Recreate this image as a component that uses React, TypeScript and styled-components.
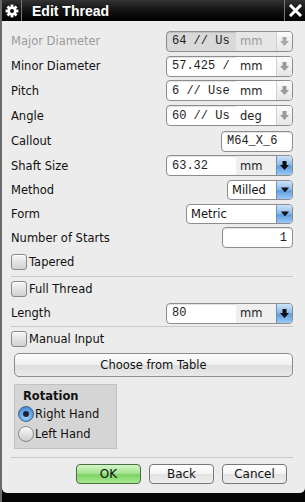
import React from 'react';
import styled, { createGlobalStyle, css } from 'styled-components';

const Global = createGlobalStyle`
  html, body { margin: 0; padding: 0; background: #2b2b2b; }
  body { width: 305px; height: 502px; overflow: hidden; font-family: "DejaVu Sans", sans-serif; }
  * { box-sizing: border-box; }
`;

const Window = styled.div`
  width: 305px;
  height: 502px;
  display: flex;
  flex-direction: column;
  background: #050505;
  border-left: 2px solid #6b6b6b;
`;

const TitleBar = styled.div`
  height: 21px;
  flex: none;
  display: flex;
  align-items: stretch;
  background: linear-gradient(#333 0%, #151515 45%, #000 100%);
  color: #fff;
`;

const TitleIconCell = styled.div<{ $side: 'left' | 'right' }>`
  width: ${p => (p.$side === 'left' ? 20 : 21)}px;
  display: flex;
  align-items: center;
  justify-content: center;
  ${p => (p.$side === 'left' ? 'border-right: 1px solid #777;' : 'border-left: 1px solid #777; margin-left: auto;')}
`;

const TitleText = styled.div`
  display: flex;
  align-items: center;
  padding-left: 10px;
  font-family: "Liberation Sans", sans-serif;
  font-weight: bold;
  font-size: 14px;
`;

const Body = styled.div`
  flex: 1;
  background: #ececec;
  border-radius: 0 0 5px 5px;
  padding: 7.5px 12px 0 9px;
  display: flex;
  flex-direction: column;
`;

const FrameBottom = styled.div`
  height: 9px;
  flex: none;
`;

const Row = styled.div<{ $h?: number }>`
  height: ${p => p.$h ?? 24}px;
  display: flex;
  align-items: center;
  justify-content: space-between;
  flex: none;
`;

const Label = styled.span<{ $disabled?: boolean }>`
  font-size: 11.5px;
  color: ${p => (p.$disabled ? '#9b9b9b' : '#111')};
`;

const Field = styled.div<{ $w: number; $disabled?: boolean }>`
  width: ${p => p.$w}px;
  height: 21px;
  border: 1px solid #8d8d8d;
  border-radius: 4px;
  display: flex;
  overflow: hidden;
  background: ${p => (p.$disabled ? '#d9d9d9' : '#fff')};
  box-shadow: inset 0 1px 1px rgba(0, 0, 0, 0.12);
`;

const ValueText = styled.div<{ $align?: 'left' | 'right'; $grow?: boolean }>`
  ${p => (p.$grow ? 'flex: 1;' : 'width: 69px;')}
  padding: 0 5px;
  display: flex;
  align-items: center;
  justify-content: ${p => (p.$align === 'right' ? 'flex-end' : 'flex-start')};
  font-family: "Liberation Mono", monospace;
  font-size: 12px;
  white-space: nowrap;
  overflow: hidden;
  color: #222;
`;

const UnitText = styled.div<{ $tone: 'white' | 'light' | 'disabled' }>`
  flex: 1;
  display: flex;
  align-items: center;
  padding-left: 4px;
  font-size: 11.5px;
  color: ${p => (p.$tone === 'disabled' ? '#9b9b9b' : '#222')};
  background: ${p => (p.$tone === 'white' ? '#fff' : p.$tone === 'light' ? '#efefef' : '#e6e6e6')};
`;

const SpinButton = styled.div<{ $active?: boolean }>`
  width: 16px;
  flex: none;
  display: flex;
  align-items: center;
  justify-content: center;
  ${p =>
    p.$active
      ? css`
          background: linear-gradient(#cfe4fa 0%, #8dbbe9 45%, #5f9ee0 55%, #9cc9f4 100%);
          border-left: 1px solid #6f8fb4;
        `
      : css`
          background: linear-gradient(#fbfbfb, #e6e6e6);
          border-left: 1px solid #cfcfcf;
        `}
`;

const Select = styled.div<{ $w: number }>`
  width: ${p => p.$w}px;
  height: 20px;
  border: 1px solid #8d8d8d;
  border-radius: 4px;
  display: flex;
  overflow: hidden;
  background: #fff;
`;

const SelectText = styled.div`
  flex: 1;
  display: flex;
  align-items: center;
  padding-left: 4px;
  font-size: 11.5px;
  color: #111;
`;

const CheckRow = styled.label`
  display: flex;
  align-items: center;
  gap: 2px;
  font-size: 11.5px;
  color: #111;
`;

const CheckBox = styled.span`
  width: 16px;
  height: 16px;
  border: 1px solid #8a8a8a;
  border-radius: 3px;
  background: linear-gradient(#f6f6f6, #d0d0d0);
  box-shadow: inset 0 1px 0 #fff;
`;

const Separator = styled.div<{ $mt: number }>`
  height: 1px;
  background: #c9c9c9;
  margin-top: ${p => p.$mt}px;
  flex: none;
`;

const WideButton = styled.div`
  height: 24px;
  margin-top: 2px;
  margin-left: 3px;
  border: 1px solid #8c8c8c;
  border-radius: 5px;
  background: linear-gradient(#fdfdfd 0%, #f0f0f0 50%, #dedede 51%, #e9e9e9 100%);
  display: flex;
  align-items: center;
  justify-content: center;
  font-size: 11.5px;
  color: #111;
  flex: none;
`;

const Group = styled.div`
  width: 103px;
  height: 65px;
  margin-top: 7px;
  margin-left: 3px;
  background: #d5d5d5;
  border: 1px solid #c2c2c2;
  padding: 2px 3px;
  display: flex;
  flex-direction: column;
  flex: none;
`;

const GroupTitle = styled.div`
  font-size: 11.5px;
  font-weight: bold;
  color: #111;
  padding-left: 5px;
  height: 17px;
  display: flex;
  align-items: center;
`;

const RadioRow = styled.div`
  height: 20px;
  display: flex;
  align-items: center;
  gap: 1px;
  font-size: 11.5px;
  color: #111;
`;

const Radio = styled.span<{ $on?: boolean }>`
  width: 16px;
  height: 16px;
  border-radius: 50%;
  display: flex;
  align-items: center;
  justify-content: center;
  ${p =>
    p.$on
      ? css`
          border: 1px solid #41658f;
          background: radial-gradient(circle at 50% 70%, #a9d3fb 0%, #5a9be0 60%, #3a78c2 100%);
          &::after {
            content: '';
            width: 6px;
            height: 6px;
            border-radius: 50%;
            background: #16243a;
          }
        `
      : css`
          border: 1px solid #8a8a8a;
          background: linear-gradient(#fafafa, #cdcdcd);
        `}
`;

const Footer = styled.div`
  display: flex;
  justify-content: flex-end;
  gap: 8px;
  padding-right: 6px;
  margin-top: 6px;
  flex: none;
`;

const DialogButton = styled.div<{ $primary?: boolean }>`
  width: 65px;
  height: 20px;
  border-radius: 4px;
  display: flex;
  align-items: center;
  justify-content: center;
  font-size: 12px;
  color: #111;
  ${p =>
    p.$primary
      ? css`
          border: 1px solid #4d6b45;
          background: linear-gradient(#d3f5c7 0%, #a5e591 45%, #7fd266 55%, #a6ea8f 100%);
        `
      : css`
          border: 1px solid #777;
          background: linear-gradient(#ffffff 0%, #f4f4f4 50%, #e2e2e2 51%, #eeeeee 100%);
        `}
`;

const Gear = () => (
  <svg width="14" height="14" viewBox="0 0 14 14">
    <g fill="#fff">
      <circle cx="7" cy="7" r="4.6" />
      {[0, 45, 90, 135, 180, 225, 270, 315].map(a => (
        <rect key={a} x="5.6" y="0.6" width="2.8" height="3.4" transform={`rotate(${a} 7 7)`} />
      ))}
    </g>
    <circle cx="7" cy="7" r="2" fill="#111" />
  </svg>
);

const CloseX = () => (
  <svg width="13" height="13" viewBox="0 0 13 13">
    <path d="M2 2 L11 11 M11 2 L2 11" stroke="#fff" strokeWidth="3" strokeLinecap="square" />
  </svg>
);

const StemArrow = ({ color }: { color: string }) => (
  <svg width="11" height="11" viewBox="0 0 11 11">
    <polygon points="3.5,1 7.5,1 7.5,5 10,5 5.5,10 1,5 3.5,5" fill={color} />
  </svg>
);

const Tri = () => (
  <svg width="10" height="8" viewBox="0 0 10 8">
    <polygon points="1,1.5 9,1.5 5,6.5" fill="#111" />
  </svg>
);

type ExprProps = { label: string; value: string; unit: string; disabled?: boolean; h: number };

const ExprRow = ({ label, value, unit, disabled, h }: ExprProps) => (
  <Row $h={h}>
    <Label $disabled={disabled}>{label}</Label>
    <Field $w={127} $disabled={disabled}>
      <ValueText>{value}</ValueText>
      <UnitText $tone={disabled ? 'disabled' : 'white'}>{unit}</UnitText>
      <SpinButton>
        <StemArrow color={disabled ? '#a8a8a8' : '#9a9a9a'} />
      </SpinButton>
    </Field>
  </Row>
);

const ActiveRow = ({ label, value, unit, h }: { label: string; value: string; unit: string; h?: number }) => (
  <Row $h={h}>
    <Label>{label}</Label>
    <Field $w={127}>
      <ValueText>{value}</ValueText>
      <UnitText $tone="light">{unit}</UnitText>
      <SpinButton $active>
        <StemArrow color="#0d0d0d" />
      </SpinButton>
    </Field>
  </Row>
);

const SelectRow = ({ label, value, w, h }: { label: string; value: string; w: number; h: number }) => (
  <Row $h={h}>
    <Label>{label}</Label>
    <Select $w={w}>
      <SelectText>{value}</SelectText>
      <SpinButton $active>
        <Tri />
      </SpinButton>
    </Select>
  </Row>
);

export default function App() {
  return (
    <>
      <Global />
      <Window>
        <TitleBar>
          <TitleIconCell $side="left">
            <Gear />
          </TitleIconCell>
          <TitleText>Edit Thread</TitleText>
          <TitleIconCell $side="right">
            <CloseX />
          </TitleIconCell>
        </TitleBar>
        <Body>
          <ExprRow h={25} label="Major Diameter" value="64 // Us" unit="mm" disabled />
          <ExprRow h={25} label="Minor Diameter" value="57.425 /" unit="mm" />
          <ExprRow h={24} label="Pitch" value="6 // Use" unit="mm" />
          <ExprRow h={26} label="Angle" value="60 // Us" unit="deg" />
          <Row $h={25}>
            <Label>Callout</Label>
            <Field $w={72}>
              <ValueText $grow>M64_X_6</ValueText>
            </Field>
          </Row>
          <ActiveRow h={24} label="Shaft Size" value="63.32" unit="mm" />
          <SelectRow h={25} label="Method" value="Milled" w={66} />
          <SelectRow h={23} label="Form" value="Metric" w={107} />
          <Row $h={24}>
            <Label>Number of Starts</Label>
            <Field $w={71}>
              <ValueText $grow $align="right">1</ValueText>
            </Field>
          </Row>
          <Row $h={24}>
            <CheckRow>
              <CheckBox />
              Tapered
            </CheckRow>
          </Row>
          <Separator $mt={2.5} />
          <Row $h={24}>
            <CheckRow>
              <CheckBox />
              Full Thread
            </CheckRow>
          </Row>
          <ActiveRow label="Length" value="80" unit="mm" h={24} />
          <Separator $mt={1} />
          <Row $h={24}>
            <CheckRow>
              <CheckBox />
              Manual Input
            </CheckRow>
          </Row>
          <WideButton>Choose from Table</WideButton>
          <Group>
            <GroupTitle>Rotation</GroupTitle>
            <RadioRow>
              <Radio $on />
              Right Hand
            </RadioRow>
            <RadioRow>
              <Radio />
              Left Hand
            </RadioRow>
          </Group>
          <Separator $mt={7.5} />
          <Footer>
            <DialogButton $primary>OK</DialogButton>
            <DialogButton>Back</DialogButton>
            <DialogButton>Cancel</DialogButton>
          </Footer>
        </Body>
        <FrameBottom />
      </Window>
    </>
  );
}
